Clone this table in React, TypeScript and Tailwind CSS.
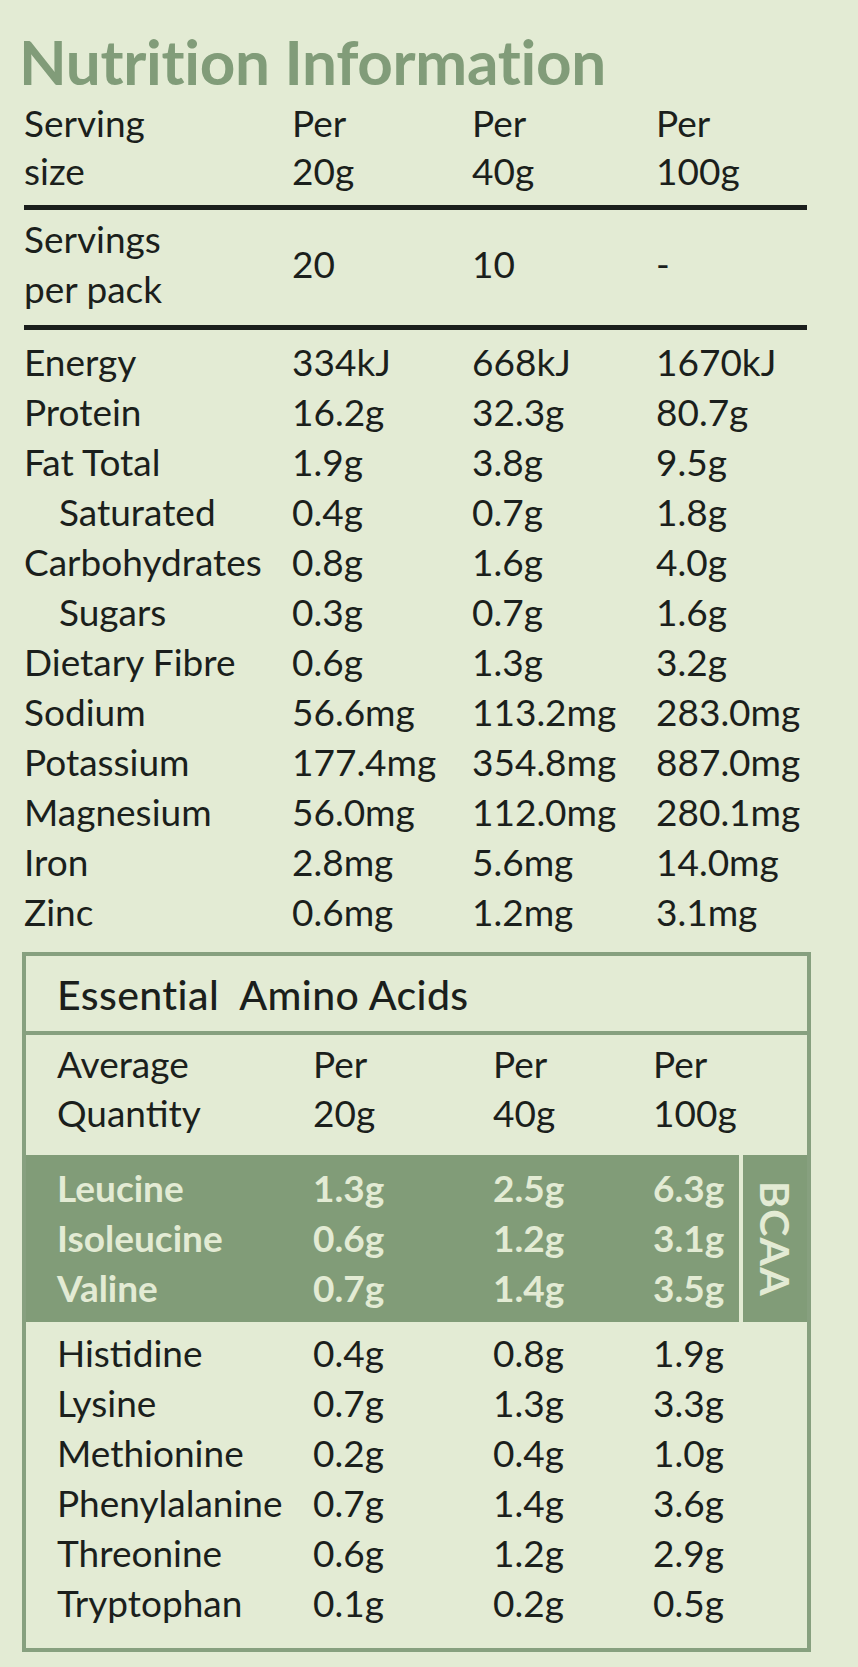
const nutrition: [string, string, string, string, boolean?][] = [
  ['Energy', '334kJ', '668kJ', '1670kJ'],
  ['Protein', '16.2g', '32.3g', '80.7g'],
  ['Fat Total', '1.9g', '3.8g', '9.5g'],
  ['Saturated', '0.4g', '0.7g', '1.8g', true],
  ['Carbohydrates', '0.8g', '1.6g', '4.0g'],
  ['Sugars', '0.3g', '0.7g', '1.6g', true],
  ['Dietary Fibre', '0.6g', '1.3g', '3.2g'],
  ['Sodium', '56.6mg', '113.2mg', '283.0mg'],
  ['Potassium', '177.4mg', '354.8mg', '887.0mg'],
  ['Magnesium', '56.0mg', '112.0mg', '280.1mg'],
  ['Iron', '2.8mg', '5.6mg', '14.0mg'],
  ['Zinc', '0.6mg', '1.2mg', '3.1mg'],
]

const bcaa = [
  ['Leucine', '1.3g', '2.5g', '6.3g'],
  ['Isoleucine', '0.6g', '1.2g', '3.1g'],
  ['Valine', '0.7g', '1.4g', '3.5g'],
]

const aminos = [
  ['Histidine', '0.4g', '0.8g', '1.9g'],
  ['Lysine', '0.7g', '1.3g', '3.3g'],
  ['Methionine', '0.2g', '0.4g', '1.0g'],
  ['Phenylalanine', '0.7g', '1.4g', '3.6g'],
  ['Threonine', '0.6g', '1.2g', '2.9g'],
  ['Tryptophan', '0.1g', '0.2g', '0.5g'],
]

export default function App() {
  return (
    <div className="min-h-[1667px] bg-[#e3ebd4] text-[#1b1f1c] font-['Lato',sans-serif]">
      <div className="pl-[24px] pt-[30px] w-[807px]">
        <h1 className="-ml-[5px] text-[62px] leading-[62px] font-bold tracking-[-0.005em] text-[#819c79]">
          Nutrition Information
        </h1>

        {/* serving size */}
        <div className="mt-[7px] pb-[10px] border-b-[5px] border-[#1b1f1c] grid grid-cols-[268px_180px_184px_1fr] text-[37px] leading-[48px]">
          <div>Serving<br />size</div>
          <div>Per<br />20g</div>
          <div>Per<br />40g</div>
          <div>Per<br />100g</div>
        </div>

        {/* servings per pack */}
        <div className="pt-[4px] pb-[11px] border-b-[5px] border-[#1b1f1c] grid grid-cols-[268px_180px_184px_1fr] items-center text-[37px] leading-[50px]">
          <div>Servings<br />per pack</div>
          <div>20</div>
          <div>10</div>
          <div>-</div>
        </div>

        <div className="pt-[7px] text-[37px] leading-[50px]">
          {nutrition.map(([name, a, b, c, sub]) => (
            <div key={name} className="grid grid-cols-[268px_180px_184px_1fr]">
              <div className={sub ? 'pl-[35px]' : ''}>{name}</div>
              <div>{a}</div>
              <div>{b}</div>
              <div>{c}</div>
            </div>
          ))}
        </div>
      </div>

      {/* amino acids box */}
      <div className="mt-[15px] ml-[22px] w-[789px] border-[4px] border-[#87a07f]">
        <div className="pl-[31px] pt-[15px] pb-[12px] border-b-[4px] border-[#87a07f] text-[41px] leading-[48px] font-medium tracking-[0.01em] whitespace-pre">
          Essential  Amino Acids
        </div>

        <div className="pl-[31px] pt-[4px] pb-[18px] grid grid-cols-[256px_180px_160px_1fr] text-[37px] leading-[49px]">
          <div>Average<br />Quantity</div>
          <div>Per<br />20g</div>
          <div>Per<br />40g</div>
          <div>Per<br />100g</div>
        </div>

        <div className="flex bg-[#819c78] text-[#e3ebd4] font-bold">
          <div className="w-[713px] pl-[31px] pt-[8px] pb-[9px] text-[37px] leading-[50px]">
            {bcaa.map(([name, a, b, c]) => (
              <div key={name} className="grid grid-cols-[256px_180px_160px_1fr]">
                <div>{name}</div>
                <div>{a}</div>
                <div>{b}</div>
                <div>{c}</div>
              </div>
            ))}
          </div>
          <div className="flex-1 border-l-[4px] border-[#e3ebd4] flex items-center justify-center">
            <span className="[writing-mode:vertical-rl] text-[41px] leading-none tracking-[0.03em]">BCAA</span>
          </div>
        </div>

        <div className="pl-[31px] pt-[6px] pb-[20px] text-[37px] leading-[50px]">
          {aminos.map(([name, a, b, c]) => (
            <div key={name} className="grid grid-cols-[256px_180px_160px_1fr]">
              <div>{name}</div>
              <div>{a}</div>
              <div>{b}</div>
              <div>{c}</div>
            </div>
          ))}
        </div>
      </div>
    </div>
  )
}
